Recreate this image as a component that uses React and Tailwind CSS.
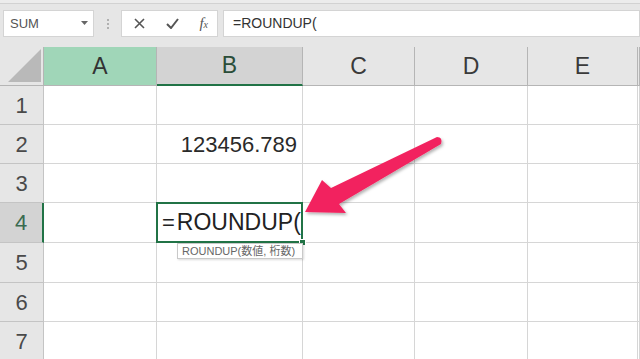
import React from "react";

const cols = ["A", "B", "C", "D", "E", ""];
const rows = [1, 2, 3, 4, 5, 6, 7];

function HeaderCell({ label }) {
  if (label === "A") {
    return (
      <div className="flex items-center justify-center bg-[#a0d6b8] border-r border-b border-[#b5b5b5] text-[23px] text-[#333]">
        {label}
      </div>
    );
  }
  if (label === "B") {
    return (
      <div className="flex items-center justify-center bg-[#d3d3d3] border-r border-[#b5b5b5] border-b-2 border-b-[#217346] text-[23px] text-[#2a4d38]">
        {label}
      </div>
    );
  }
  return (
    <div className="flex items-center justify-center bg-[#e6e6e6] border-r border-b border-[#b5b5b5] text-[23px] text-[#3a3a3a]">
      {label}
    </div>
  );
}

function RowHeader({ n }) {
  if (n === 4) {
    return (
      <div className="flex items-center justify-center bg-[#d3d3d3] border-b border-[#c4c4c4] border-r-2 border-r-[#217346] text-[22px] text-[#3a6b50]">
        {n}
      </div>
    );
  }
  return (
    <div className="flex items-center justify-center bg-[#e6e6e6] border-b border-r border-[#c4c4c4] text-[22px] text-[#4a4a4a]">
      {n}
    </div>
  );
}

function Cell({ row, col }) {
  if (row === 2 && col === "B") {
    return (
      <div className="flex items-center justify-end pr-[5px] bg-white border-r border-b border-[#d6d6d6] text-[22px] text-[#2a2a2a]">
        123456.789
      </div>
    );
  }
  if (row === 4 && col === "B") {
    return (
      <div className="relative bg-white border-r border-b border-[#d6d6d6]">
        <div className="absolute -left-px -top-px -right-px -bottom-px border-2 border-[#217346] overflow-hidden flex items-center pl-[4px] text-[23px] text-[#222] whitespace-nowrap">
          <span className="text-[22px] mr-[2px]">=</span>ROUNDUP(
        </div>
        <div className="absolute -right-[4px] -bottom-[4px] w-[7px] h-[7px] bg-[#217346] border border-white" />
        <div className="absolute left-[20px] top-[40px] w-[126px] h-[16px] bg-white border border-[#c9c9c9] shadow-[1px_1px_2px_rgba(0,0,0,0.15)] flex items-center pl-[4px] text-[11px] text-[#666] whitespace-nowrap z-10">
          ROUNDUP(数値, 桁数)
        </div>
      </div>
    );
  }
  return <div className="bg-white border-r border-b border-[#d6d6d6]" />;
}

export default function App() {
  return (
    <div
      className="relative w-[640px] h-[359px] overflow-hidden bg-[#e6e6e6]"
      style={{ fontFamily: '"Liberation Sans", "Noto Sans CJK JP", sans-serif' }}
    >
      {/* Formula bar */}
      <div className="h-[47px] flex flex-col">
        <div className="h-[4px] bg-[#ececec] border-b border-[#d2d2d2]" />
        <div className="flex items-center mt-[6px] h-[27px]">
          <div className="ml-[3px] w-[91px] h-[27px] bg-white border border-[#d4d4d4] flex items-center justify-between pl-[6px] pr-[5px]">
            <span className="text-[13px] text-[#555]">SUM</span>
            <svg width="7" height="5" viewBox="0 0 7 5">
              <path d="M0 0h7L3.5 4z" fill="#666" />
            </svg>
          </div>
          <div className="w-[27px] flex flex-col items-center gap-[2px]">
            <span className="w-[2px] h-[2px] bg-[#b0b0b0]" />
            <span className="w-[2px] h-[2px] bg-[#b0b0b0]" />
            <span className="w-[2px] h-[2px] bg-[#b0b0b0]" />
          </div>
          <div className="w-[97px] h-[27px] bg-white border border-[#d4d4d4] flex items-center justify-between pl-[12px] pr-[9px]">
            <svg width="11" height="11" viewBox="0 0 11 11">
              <path d="M1 1l9 9M10 1l-9 9" stroke="#555" strokeWidth="1.6" />
            </svg>
            <svg width="13" height="11" viewBox="0 0 13 11">
              <path d="M1 6l4 4 7-9" stroke="#555" strokeWidth="2" fill="none" />
            </svg>
            <span className="text-[15px] text-[#555] italic leading-none" style={{ fontFamily: '"Liberation Serif", serif' }}>
              f<span className="text-[10px]">x</span>
            </span>
          </div>
          <div className="ml-[5px] flex-1 h-[27px] bg-white border border-[#d4d4d4] flex items-center pl-[9px] text-[14px] text-[#333]">
            =ROUNDUP(
          </div>
        </div>
      </div>

      {/* Sheet grid */}
      <div className="grid grid-cols-[44px_113px_146px_112px_113px_110px_1fr] grid-rows-[39px_39px_39px_39px_40px_40px_39px_39px]">
        <div className="relative bg-[#e6e6e6] border-r border-b border-[#b5b5b5]">
          <svg className="absolute left-[8px] top-[2px]" width="34" height="34" viewBox="0 0 34 34">
            <path d="M33 0V33H0z" fill="#b9b9b9" />
          </svg>
        </div>
        {cols.map((c, i) => (
          <HeaderCell key={i} label={c} />
        ))}
        {rows.map((r) => (
          <React.Fragment key={r}>
            <RowHeader n={r} />
            {cols.map((c, i) => (
              <Cell key={i} row={r} col={c} />
            ))}
          </React.Fragment>
        ))}
      </div>

      {/* Callout arrow */}
      <svg className="absolute left-0 top-0 pointer-events-none" width="640" height="359" viewBox="0 0 640 359">
        <defs>
          <filter id="sh" x="-20%" y="-20%" width="140%" height="140%">
            <feDropShadow dx="1.5" dy="2" stdDeviation="1.5" floodColor="#000" floodOpacity="0.3" />
          </filter>
        </defs>
        <g filter="url(#sh)" fill="#f2245e">
          <path d="M305 212L322 180L331 188L437 137Q443 137 441 144L339 204L346 213Z" />
        </g>
      </svg>
    </div>
  );
}
